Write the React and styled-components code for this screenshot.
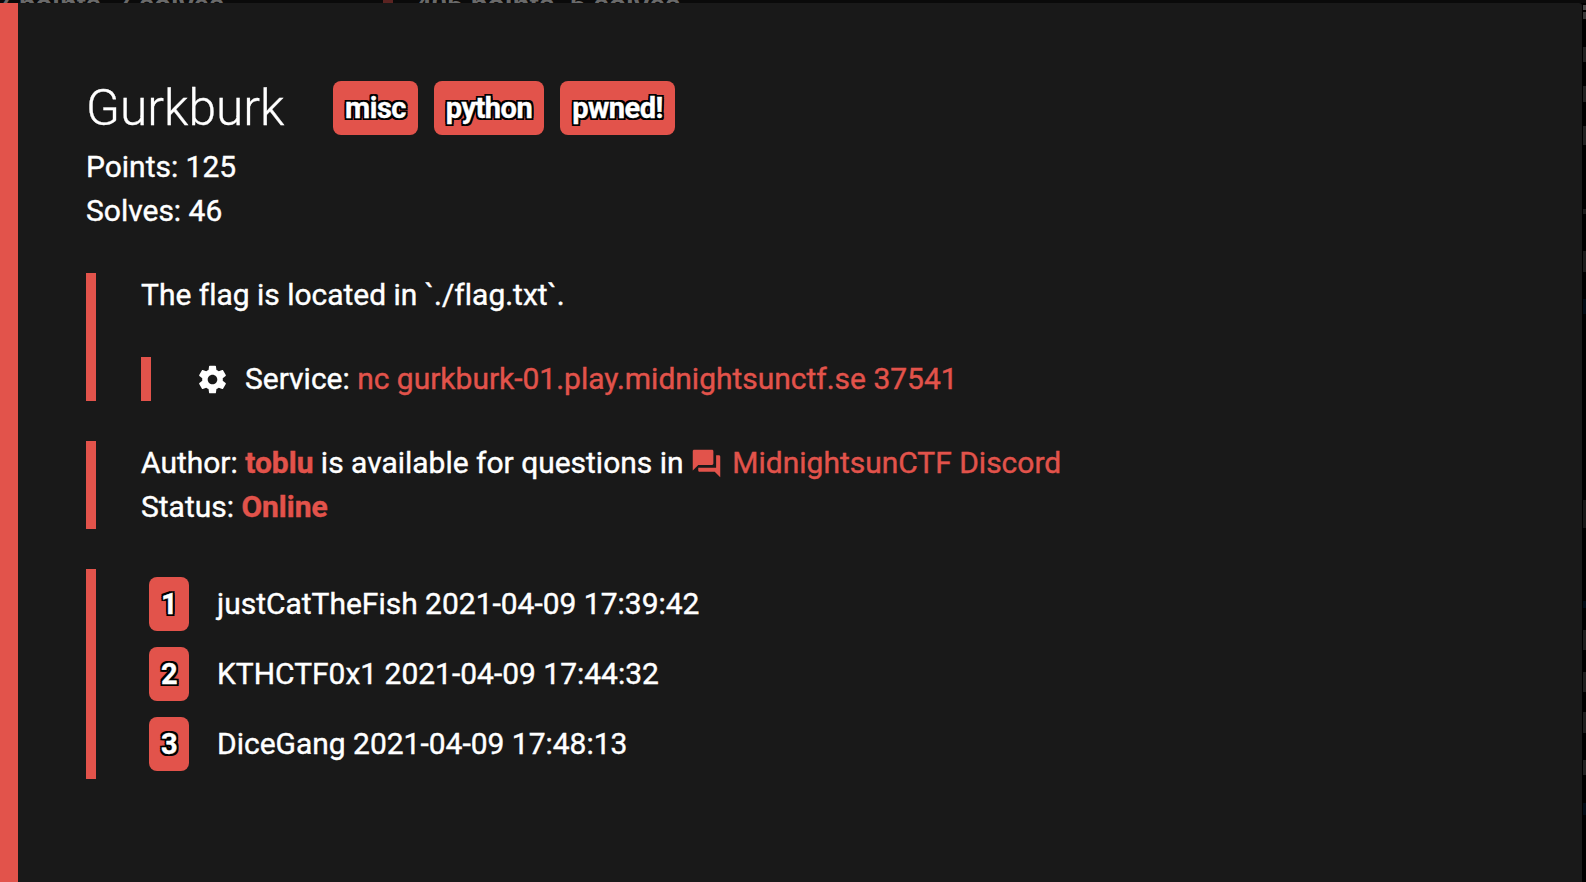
import React from "react";
import styled, { createGlobalStyle } from "styled-components";

const RED = "#e2534b";

const GlobalStyle = createGlobalStyle`
  * { box-sizing: border-box; }
  body {
    margin: 0;
    background: #000;
    overflow: hidden;
    font-family: Roboto, "Liberation Sans", sans-serif;
    font-variant-ligatures: none;
  }
`;

const Page = styled.div`
  width: 1586px;
  height: 882px;
  display: flex;
  flex-direction: column;
  overflow: hidden;
  background: #000;
`;

const Backdrop = styled.div`
  height: 3px;
  display: flex;
  overflow: hidden;
  background: #0a0a0a;
`;

const BackdropCard = styled.div`
  flex: none;
  width: ${(p) => p.$width}px;
  height: 3px;
  padding-left: ${(p) => p.$pad}px;
  border-left: ${(p) => (p.$edge ? "10px solid #5b2321" : "0")};
  overflow: hidden;
  display: flex;
  align-items: flex-start;
  color: #6a6a6a;
  font-family: "Liberation Sans", sans-serif;
  font-size: ${(p) => (p.$edge ? 28 : 27.4)}px;
  font-weight: 700;
  line-height: 30px;
  white-space: pre;

  span { margin: -10px 0 0 ${(p) => (p.$edge ? 0 : -4)}px; }
`;

const Main = styled.div`
  flex: 1;
  display: flex;
`;

const Modal = styled.section`
  width: 1582px;
  border-left: 18px solid ${RED};
  border-top-right-radius: 3px;
  padding: 78px 68px 0;
  background: #191919;
  color: #fff;
  font-size: 29.97px;
  line-height: 44px;
`;

const Header = styled.header`
  display: flex;
  height: 54px;
  align-items: center;
  margin-bottom: 10px;
`;

const Title = styled.h1`
  width: 247px;
  margin: 0;
  font-size: 49.7px;
  font-weight: 300;
  line-height: 54px;
  -webkit-text-stroke: 0.3px #fff;
`;

const Tags = styled.div`
  display: flex;
  gap: 16px;
`;

const Badge = styled.span`
  flex: none;
  width: ${(p) => p.$width}px;
  height: 54px;
  border-radius: 8px;
  background: ${RED};
  font-size: 29px;
  font-weight: 700;
  letter-spacing: -0.5px;
  line-height: 54px;
  text-align: center;
  -webkit-text-stroke: 0.4px #fff;
  text-shadow: -2px -2px 0 #000, 2px -2px 0 #000, -2px 2px 0 #000, 2px 2px 0 #000,
    0 -2px 0 #000, 0 2px 0 #000, -2px 0 0 #000, 2px 0 0 #000;
`;

const Line = styled.div`
  display: flex;
  height: 44px;
  align-items: center;
  white-space: pre;
  -webkit-text-stroke: 0.4px currentColor;
`;

const Quote = styled.blockquote`
  margin: 40px 0 0;
  padding-left: 45px;
  border-left: 10px solid ${RED};
`;

const Accent = styled.span`
  color: ${RED};
  -webkit-text-stroke-color: ${RED};
  font-weight: ${(p) => (p.$bold ? 700 : 400)};
`;

const Icon = styled.svg`
  flex: none;
  width: 33px;
  height: 33px;
  fill: ${(p) => p.$color};
  stroke: none;
  margin: 0 ${(p) => p.$right}px 0 ${(p) => p.$left}px;
`;

const Solver = styled.div`
  display: flex;
  height: 70px;
  align-items: center;
  gap: 28px;
  padding-left: 8px;
`;

const SolverText = styled.span`
  -webkit-text-stroke: 0.4px currentColor;
`;

const RightStrip = styled.div`
  width: 4px;
  overflow: hidden;
  background: #000;
`;

const Mark = styled.div`
  width: 3px;
  height: ${(p) => p.$h}px;
  margin: ${(p) => p.$gap}px 0 0 1px;
  background: ${(p) => p.$c};
`;

const marks = [
  [2, 5, "#4a4a4a"], [2, 7, "#3a3a3a"], [28, 15, "#222"], [24, 16, "#222"],
  [24, 19, "#222"], [64, 5, "#1c1c1c"], [37, 21, "#1c1c1c"], [27, 15, "#020c16"],
  [186, 28, "#181818"], [73, 7, "#020c16"], [22, 20, "#1f1f1f"], [22, 20, "#1f1f1f"],
  [20, 21, "#1f1f1f"], [27, 15, "#222"], [28, 12, "#020c16"],
];

const solvers = [
  "justCatTheFish 2021-04-09 17:39:42",
  "KTHCTF0x1 2021-04-09 17:44:32",
  "DiceGang 2021-04-09 17:48:13",
];

export default function App() {
  return (
    <Page>
      <GlobalStyle />
      <Backdrop>
        <BackdropCard $width={383} $pad={0}><span>7 points, 7 solves</span></BackdropCard>
        <BackdropCard $width={600} $pad={23} $edge><span>405 points, 5 solves</span></BackdropCard>
      </Backdrop>
      <Main>
        <Modal>
          <Header>
            <Title>Gurkburk</Title>
            <Tags>
              <Badge $width={85}>misc</Badge>
              <Badge $width={110}>python</Badge>
              <Badge $width={115}>pwned!</Badge>
            </Tags>
          </Header>
          <Line>Points: 125</Line>
          <Line>Solves: 46</Line>
          <Quote>
            <Line>The flag is located in `./flag.txt`.</Line>
            <Quote>
              <Line>
                <Icon viewBox="0 0 24 24" $color="#fff" $left={-0.4} $right={16.4}>
                  <path d="M19.43 12.98c.04-.32.07-.64.07-.98s-.03-.66-.07-.98l2.11-1.65c.19-.15.24-.42.12-.64l-2-3.46c-.12-.22-.39-.3-.61-.22l-2.49 1c-.52-.4-1.08-.73-1.69-.98l-.38-2.65C14.46 2.18 14.25 2 14 2h-4c-.25 0-.46.18-.49.42l-.38 2.65c-.61.25-1.17.59-1.69.98l-2.49-1c-.23-.09-.49 0-.61.22l-2 3.46c-.13.22-.07.49.12.64l2.11 1.65c-.04.32-.07.65-.07.98s.03.66.07.98l-2.11 1.65c-.19.15-.24.42-.12.64l2 3.46c.12.22.39.3.61.22l2.49-1c.52.4 1.08.73 1.69.98l.38 2.65c.03.24.24.42.49.42h4c.25 0 .46-.18.49-.42l.38-2.65c.61-.25 1.17-.59 1.69-.98l2.49 1c.23.09.49 0 .61-.22l2-3.46c.12-.22.07-.49-.12-.64l-2.11-1.65zM12 15.5c-1.93 0-3.5-1.57-3.5-3.5s1.57-3.5 3.5-3.5 3.5 1.57 3.5 3.5-1.57 3.5-3.5 3.5z" />
                </Icon>
                <span>Service: </span>
                <Accent>nc gurkburk-01.play.midnightsunctf.se 37541</Accent>
              </Line>
            </Quote>
          </Quote>
          <Quote>
            <Line>
              <span>Author: </span>
              <Accent $bold>toblu</Accent>
              <span> is available for questions in </span>
              <Icon viewBox="0 0 24 24" $color={RED} $left={-1} $right={9.4}>
                <path d="M21 6h-2v9H6v2c0 .55.45 1 1 1h11l4 4V7c0-.55-.45-1-1-1zm-4 6V3c0-.55-.45-1-1-1H3c-.55 0-1 .45-1 1v14l4-4h10c.55 0 1-.45 1-1z" />
              </Icon>
              <Accent>MidnightsunCTF Discord</Accent>
            </Line>
            <Line>
              <span>Status: </span>
              <Accent $bold>Online</Accent>
            </Line>
          </Quote>
          <Quote>
            {solvers.map((text, i) => (
              <Solver key={text}>
                <Badge $width={40}>{i + 1}</Badge>
                <SolverText>{text}</SolverText>
              </Solver>
            ))}
          </Quote>
        </Modal>
        <RightStrip>
          {marks.map(([gap, h, c], i) => <Mark key={i} $gap={gap} $h={h} $c={c} />)}
        </RightStrip>
      </Main>
    </Page>
  );
}
